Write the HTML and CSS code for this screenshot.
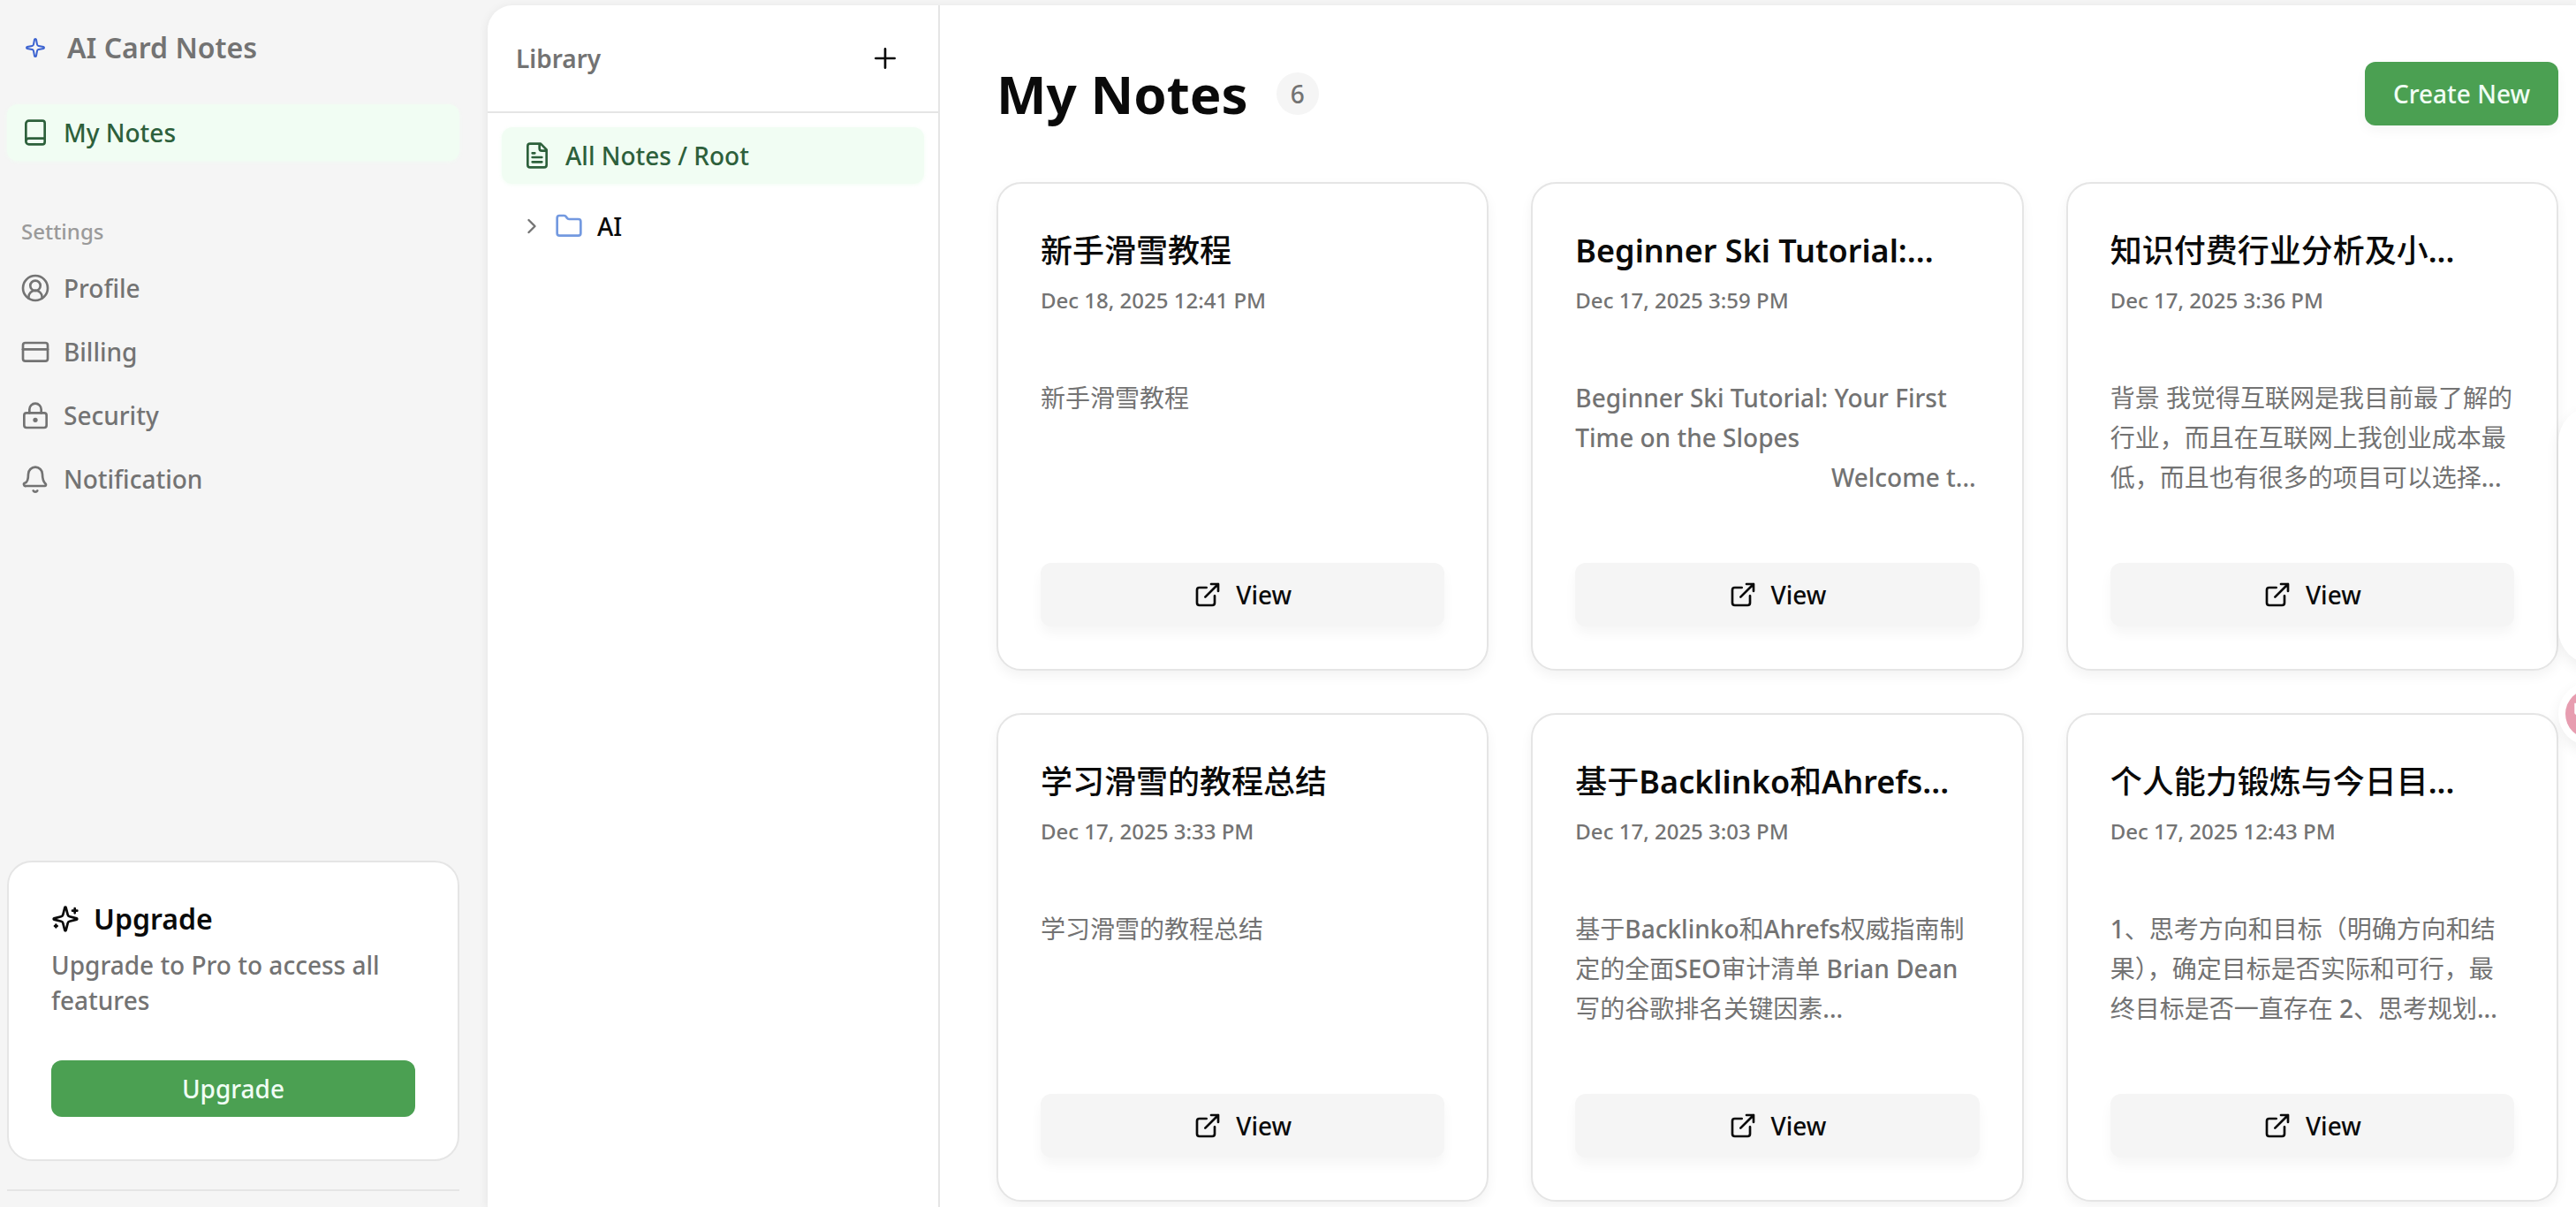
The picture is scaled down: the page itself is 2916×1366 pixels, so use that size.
FILE: index.html
```html
<!DOCTYPE html>
<html lang="en">
<head>
<meta charset="utf-8">
<title>AI Card Notes</title>
<link rel="stylesheet" href="styles.css">
</head>
<body>
<svg class="sprite" aria-hidden="true">
  <symbol id="open" viewBox="0 0 24 24"><path d="M15 3h6v6M10 14 21 3M18 13v6a2 2 0 0 1-2 2H5a2 2 0 0 1-2-2V8a2 2 0 0 1 2-2h6"/></symbol>
</svg>
<div class="app">
  <aside class="sidebar">
    <a class="brand" href="#"><svg class="icon brand-icon" viewBox="0 0 24 24"><path d="M11.02 2.81a1 1 0 0 1 1.96 0l1.05 5.56a2 2 0 0 0 1.6 1.6l5.56 1.05a1 1 0 0 1 0 1.96l-5.56 1.05a2 2 0 0 0-1.6 1.6l-1.05 5.56a1 1 0 0 1-1.96 0l-1.05-5.56a2 2 0 0 0-1.6-1.6l-5.56-1.05a1 1 0 0 1 0-1.96l5.56-1.05a2 2 0 0 0 1.6-1.6z"/></svg><span>AI Card Notes</span></a>
    <nav class="nav">
      <a class="nav-item active" href="#"><svg class="icon" viewBox="0 0 24 24"><path d="M4 19.500v-15A2.500 2.500 0 0 1 6.500 2H18a2 2 0 0 1 2 2v16a2 2 0 0 1-2 2H6.500a2.500 2.500 0 0 1 0-5H20"/></svg>My Notes</a>
    </nav>
    <nav class="nav settings" aria-label="Settings">
      <h2 class="nav-label">Settings</h2>
      <a class="nav-item" href="#"><svg class="icon" viewBox="0 0 24 24"><circle cx="12" cy="12" r="10.500"/><circle cx="12" cy="10" r="4.300"/><path d="M6.300 20.500v-.8a5.700 5.700 0 0 1 11.400 0v.8"/></svg>Profile</a>
      <a class="nav-item" href="#"><svg class="icon" viewBox="0 0 24 24"><rect x="1.500" y="4.500" width="21" height="15.500" rx="2"/><path d="M1.500 10h21"/></svg>Billing</a>
      <a class="nav-item" href="#"><svg class="icon" viewBox="0 0 24 24"><circle cx="12" cy="16" r="1"/><rect x="2.500" y="10" width="19" height="12.500" rx="2"/><path d="M7 10V7a5 5 0 0 1 10 0v3"/></svg>Security</a>
      <a class="nav-item" href="#"><svg class="icon" viewBox="0 0 24 24"><path d="M10.268 22a2 2 0 0 0 3.464 0M3.262 15.326A1 1 0 0 0 4 18h16a1 1 0 0 0 .74-1.673C19.410 14.956 18 13.499 18 8A6 6 0 0 0 6 8c0 5.499-1.411 6.956-2.738 7.326"/></svg>Notification</a>
    </nav>
    <div class="sidebar-foot">
      <section class="upgrade">
        <h2 class="upgrade-title"><svg class="icon" viewBox="0 0 24 24"><path d="M9.937 15.500A2 2 0 0 0 8.500 14.063l-6.135-1.582a.5.5 0 0 1 0-.962L8.500 9.936A2 2 0 0 0 9.937 8.500l1.582-6.135a.5.5 0 0 1 .963 0L14.063 8.500A2 2 0 0 0 15.500 9.937l6.135 1.581a.5.5 0 0 1 0 .964L15.500 14.063a2 2 0 0 0-1.437 1.437l-1.582 6.135a.5.5 0 0 1-.963 0zM20 3v4M22 5h-4M4 17v2M5 18H3"/></svg>Upgrade</h2>
        <p class="upgrade-text">Upgrade to Pro to access all features</p>
        <button class="btn primary wide">Upgrade</button>
      </section>
    </div>
  </aside>
  <div class="panel">
    <section class="library">
      <header class="library-head">
        <h2 class="library-title">Library</h2>
        <button class="icon-btn" aria-label="Add folder"><svg class="icon" viewBox="0 0 24 24"><path d="M4 12h16M12 4v16"/></svg></button>
      </header>
      <div class="tree">
        <a class="tree-item active" href="#"><svg class="icon" viewBox="0 0 24 24"><path d="M15 2H6a2 2 0 0 0-2 2v16a2 2 0 0 0 2 2h12a2 2 0 0 0 2-2V7zM14 2v4a2 2 0 0 0 2 2h4M10 10H8M16 13.500H8M16 17.500H8"/></svg>All Notes / Root</a>
        <a class="tree-item folder" href="#"><svg class="icon chevron" viewBox="0 0 24 24"><path d="m9 18 6-6-6-6"/></svg><svg class="icon folder-icon" viewBox="0 0 24 24"><path d="M20 20a2 2 0 0 0 2-2V8a2 2 0 0 0-2-2h-7.900a2 2 0 0 1-1.690-.9L9.600 3.900A2 2 0 0 0 7.930 3H4a2 2 0 0 0-2 2v13a2 2 0 0 0 2 2z"/></svg><span class="folder-name">AI</span></a>
      </div>
    </section>
    <main class="main">
      <header class="main-head">
        <h1 class="page-title">My Notes</h1>
        <span class="count">6</span>
        <button class="btn primary create">Create New</button>
      </header>
      <div class="cards">
        <article class="card">
          <h3 class="card-title" lang="zh">新手滑雪教程</h3>
          <time class="date">Dec 18, 2025 12:41 PM</time>
          <p class="excerpt" lang="zh">新手滑雪教程</p>
          <button class="btn view"><svg class="icon"><use href="#open"/></svg>View</button>
        </article>
        <article class="card">
          <h3 class="card-title">Beginner Ski Tutorial:...</h3>
          <time class="date">Dec 17, 2025 3:59 PM</time>
          <p class="excerpt">Beginner Ski Tutorial: Your First Time on the Slopes <span class="tail">Welcome t...</span></p>
          <button class="btn view"><svg class="icon"><use href="#open"/></svg>View</button>
        </article>
        <article class="card">
          <h3 class="card-title" lang="zh">知识付费行业分析及小<span lang="en">...</span></h3>
          <time class="date">Dec 17, 2025 3:36 PM</time>
          <p class="excerpt" lang="zh">背景 我觉得互联网是我目前最了解的行业，而且在互联网上我创业成本最低，而且也有很多的项目可以选择<span lang="en">...</span></p>
          <button class="btn view"><svg class="icon"><use href="#open"/></svg>View</button>
        </article>
        <article class="card">
          <h3 class="card-title" lang="zh">学习滑雪的教程总结</h3>
          <time class="date">Dec 17, 2025 3:33 PM</time>
          <p class="excerpt" lang="zh">学习滑雪的教程总结</p>
          <button class="btn view"><svg class="icon"><use href="#open"/></svg>View</button>
        </article>
        <article class="card">
          <h3 class="card-title" lang="zh">基于<span lang="en">Backlinko</span>和<span lang="en">Ahrefs...</span></h3>
          <time class="date">Dec 17, 2025 3:03 PM</time>
          <p class="excerpt" lang="zh">基于<span lang="en">Backlinko</span>和<span lang="en">Ahrefs</span>权威指南制定的全面<span lang="en">SEO</span>审计清单 <span lang="en">Brian Dean</span> 写的谷歌排名关键因素<span lang="en">...</span></p>
          <button class="btn view"><svg class="icon"><use href="#open"/></svg>View</button>
        </article>
        <article class="card">
          <h3 class="card-title" lang="zh">个人能力锻炼与今日目<span lang="en">...</span></h3>
          <time class="date">Dec 17, 2025 12:43 PM</time>
          <p class="excerpt" lang="zh"><span lang="en">1</span>、思考方向和目标（明确方向和结果），确定目标是否实际和可行，最终目标是否一直存在 <span lang="en">2</span>、思考规划<span lang="en">...</span></p>
          <button class="btn view"><svg class="icon"><use href="#open"/></svg>View</button>
        </article>
      </div>
    </main>
  </div>
</div>
<div class="float-panel"></div>
<button class="float-btn" aria-label="Assistant"><svg class="float-icon" viewBox="0 0 60 60"><circle cx="30" cy="30" r="30" fill="#e79db0"/><path d="M11 17h38v14H14a3 3 0 0 1-3-3z" fill="#fff"/></svg></button>
</body>
</html>
```
FILE: styles.css
```css
*, *::before, *::after { box-sizing: border-box; }
body {
  margin: 0;
  background: #f5f5f5;
  color: #0a0a0a;
  font: 500 28px/40px "Noto Sans", "Noto Sans CJK SC", sans-serif;
  overflow: hidden;
}
h1, h2, h3, p { margin: 0; }
a { color: inherit; text-decoration: none; }
button { font: inherit; color: inherit; border: 0; margin: 0; padding: 0; background: none; }
.sprite { display: none; }
.icon {
  width: 32px; height: 32px; flex: none;
  fill: none; stroke: currentColor; stroke-width: 2;
  stroke-linecap: round; stroke-linejoin: round;
}
.app { display: flex; height: 100vh; }

/* Sidebar */
.sidebar {
  width: 552px; flex: none;
  padding: 22px 32px 18px 8px;
  display: flex; flex-direction: column;
  color: #737373;
}
.brand {
  display: flex; align-items: center; gap: 24px;
  height: 64px; padding-left: 20px; margin-bottom: 32px;
  font-size: 32px; font-weight: 600;
}
.brand-icon { width: 24px; height: 24px; color: #3b62d0; }
.nav { display: flex; flex-direction: column; gap: 8px; }
.nav-item {
  display: flex; align-items: center; gap: 16px;
  height: 64px; padding: 0 16px; border-radius: 12px;
}
.active { background: #f1fdf3; color: #2d603b; box-shadow: 0 1px 4px rgba(241, 253, 243, .9); }
.settings { margin-top: 48px; }
.nav-label { height: 56px; padding-left: 16px; font-size: 24px; line-height: 64px; font-weight: 500; color: #9a9a9a; }
.sidebar-foot { margin-top: auto; border-bottom: 2px solid #e5e5e5; padding-bottom: 32px; }
.upgrade { background: #fff; border: 2px solid #e5e5e5; border-radius: 28px; padding: 48px; }
.upgrade-title { display: flex; align-items: center; gap: 16px; height: 32px; font-size: 32px; font-weight: 600; color: #0a0a0a; }
.upgrade-text { margin: 16px 0 48px; }

/* Buttons */
.btn { display: flex; align-items: center; justify-content: center; border-radius: 12px; height: 72px; }
.primary { background: #4ba052; color: #f0fdf4; }
.wide { width: 100%; height: 64px; }

/* Library column */
.panel {
  flex: 1; min-width: 0; margin-top: 6px; display: flex;
  background: #fff; border-radius: 28px 0 0 0;
  box-shadow: 0 2px 12px rgba(0, 0, 0, .08);
}
.library { width: 512px; flex: none; border-right: 2px solid #e5e5e5; }
.library-head {
  display: flex; align-items: center; justify-content: space-between;
  height: 122px; padding: 0 32px; border-bottom: 2px solid #e5e5e5;
}
.library-title { font-size: 28px; font-weight: 600; color: #737373; }
.icon-btn { width: 56px; height: 56px; display: grid; place-items: center; }
.tree { display: flex; flex-direction: column; gap: 16px; padding: 16px; }
.tree-item { display: flex; align-items: center; gap: 16px; height: 64px; padding: 0 24px; border-radius: 12px; }
.folder { padding-left: 20px; gap: 16px; }
.chevron { width: 28px; color: #737373; }
.folder-icon { margin-left: -4px; color: #7399e0; }

/* Notes */
.main { flex: 1; min-width: 0; padding: 64px 20px 0 64px; }
.main-head { display: flex; align-items: center; height: 72px; margin-bottom: 64px; }
.page-title { font-size: 60px; line-height: 72px; font-weight: 700; }
.count {
  width: 48px; height: 48px; margin-left: 32px; border-radius: 50%;
  display: grid; place-items: center; background: #f5f5f5; color: #737373;
}
.create { margin-left: auto; padding: 0 32px; box-shadow: 0 6px 14px rgba(0, 0, 0, .04); }
.cards { display: grid; grid-template-columns: repeat(3, minmax(0, 1fr)); gap: 48px; }
.card {
  display: flex; flex-direction: column; height: 553px; padding: 48px;
  border: 2px solid #e5e5e5; border-radius: 28px; background: #fff;
  box-shadow: 0 6px 14px rgba(0, 0, 0, .05);
}
.card-title { font-size: 36px; line-height: 56px; font-weight: 600; white-space: nowrap; }
.card-title:lang(zh) { font-weight: 500; }
.card-title :lang(en) { font-weight: 600; }
.date { font-size: 24px; line-height: 32px; margin-top: 12px; color: #737373; }
.excerpt { margin-top: 72px; line-height: 45px; color: #737373; }
.excerpt:lang(zh) { font-weight: 400; }
.excerpt :lang(en) { font-weight: 500; }
.tail { display: block; padding-right: 4px; text-align: right; }
.view { margin-top: auto; gap: 16px; background: #f5f5f5; box-shadow: 0 8px 14px rgba(0, 0, 0, .04); }

/* Floating widget docked past the right edge */
.float-panel {
  position: fixed; top: 460px; right: -60px; width: 80px; height: 292px;
  border-radius: 40px; background: #fff; box-shadow: 0 6px 16px rgba(0, 0, 0, .07);
}
.float-btn {
  position: fixed; top: 772px; right: -52px; width: 72px; height: 72px;
  display: grid; place-items: center;
  border-radius: 50%; background: #fff; box-shadow: 0 6px 16px rgba(0, 0, 0, .07);
}
.float-icon { width: 56px; height: 56px; }
```
